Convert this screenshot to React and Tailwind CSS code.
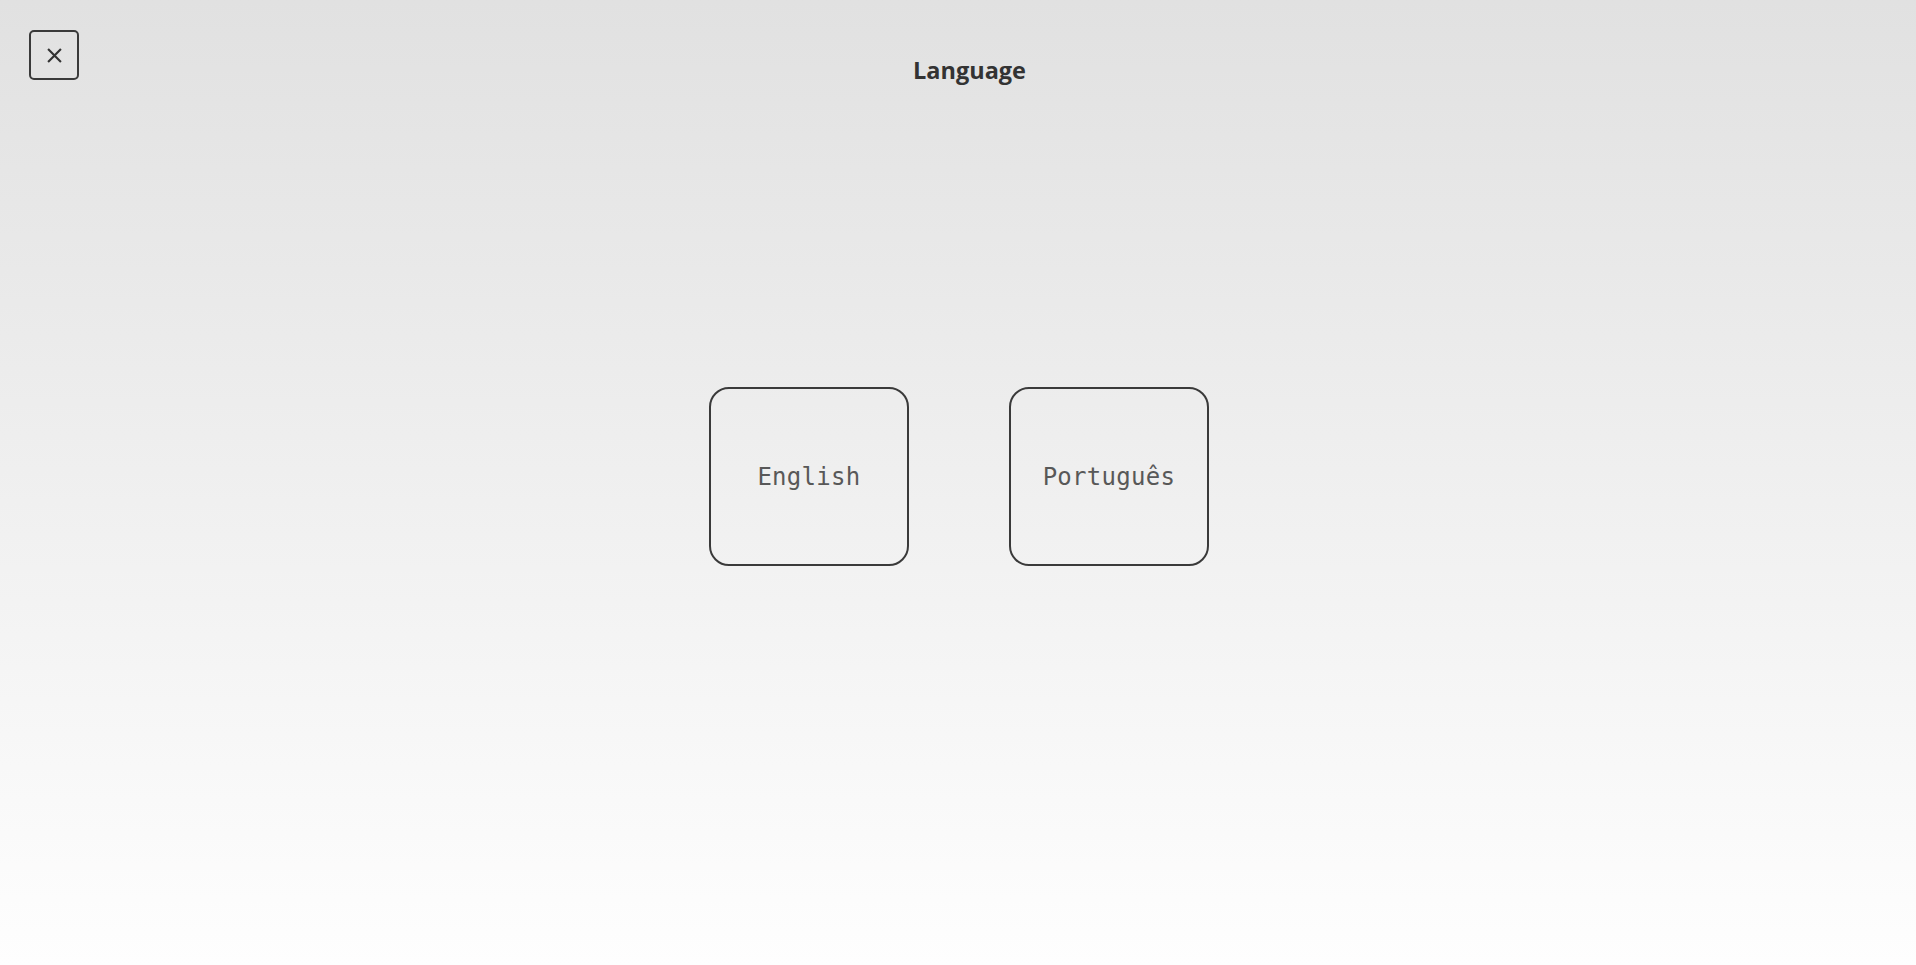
import React from 'react';

const LanguageButton = ({ label, onClick }) => {
  return (
    <button
      onClick={onClick}
      className="w-[200px] h-[179px] flex items-center justify-center rounded-[20px] border-2 border-[#3a3a3a] bg-transparent text-[24px] tracking-[0.3px] text-[#585858] hover:bg-white/40"
      style={{ fontFamily: '"DejaVu Sans Mono", "Liberation Mono", monospace' }}
    >
      {label}
    </button>
  );
};

const App = () => {
  return (
    <div
      className="h-screen w-full flex flex-col bg-gradient-to-b from-[#e1e1e1] to-[#fefefe]"
      style={{ fontFamily: '"Open Sans", "Noto Sans", sans-serif' }}
    >
      <header className="flex items-start h-[80px] pt-[30px] px-[29px]">
        <button className="w-[50px] h-[50px] flex items-center justify-center rounded-[5px] border-2 border-[#3a3a3a] text-[#333333]">
          <svg width="15" height="15" viewBox="0 0 14 14" fill="none" stroke="currentColor" strokeWidth="2" strokeLinecap="butt">
            <path d="M1 1 L13 13 M13 1 L1 13" />
          </svg>
        </button>
        <h1 className="flex-1 text-center pr-[27px] mt-[30px] text-[23.5px] leading-[20px] font-bold text-[#333333]">
          Language
        </h1>
      </header>
      <main className="flex-1 flex items-center justify-center gap-[100px] pb-[92px] pl-[2px]">
        <LanguageButton label="English" />
        <LanguageButton label="Português" />
      </main>
    </div>
  );
};

export default App;
